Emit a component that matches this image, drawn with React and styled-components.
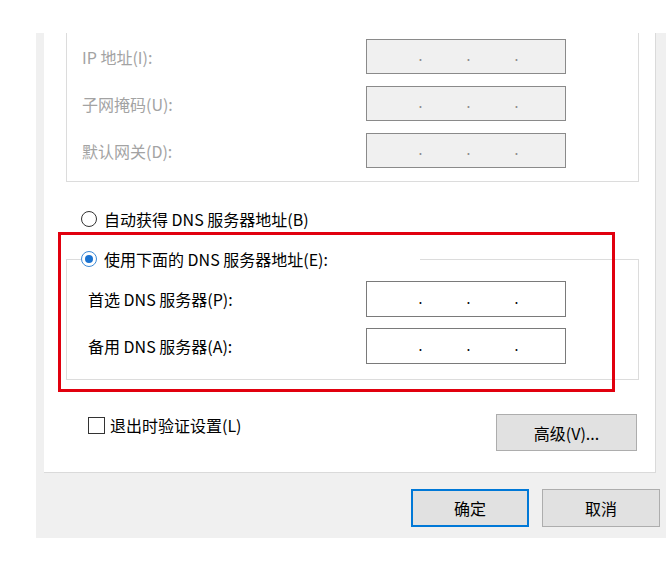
import React from "react";
import styled, { createGlobalStyle } from "styled-components";

const GlobalStyle = createGlobalStyle`
  html, body {
    margin: 0;
    padding: 0;
    background: #fff;
  }
  body {
    font-family: "Noto Sans CJK SC", "Noto Sans", sans-serif;
    font-size: 16px;
    color: #000;
  }
  * {
    box-sizing: border-box;
  }
`;

const Page = styled.div`
  padding: 33px 0 0 36px;
  height: 570px;
`;

const Dialog = styled.div`
  width: 630px;
  height: 505px;
  background: #f0f0f0;
  display: flex;
  flex-direction: column;
`;

const Panel = styled.div`
  position: relative;
  margin-left: 8px;
  width: 612px;
  height: 440px;
  background: #fff;
  border-right: 1px solid #dadada;
  border-bottom: 1px solid #dadada;
  padding-left: 22px;
`;

const GroupTop = styled.div`
  width: 573px;
  height: 149px;
  border: 1px solid #dcdcdc;
  border-top: none;
  padding: 6px 0 0 15px;
  display: flex;
  flex-direction: column;
  gap: 12px;
`;

const Row = styled.div`
  display: flex;
  align-items: center;
  height: ${(p) => p.$h}px;
`;

const Label = styled.span`
  width: ${(p) => p.$w}px;
  line-height: 20px;
  color: ${(p) => (p.$disabled ? "#a3a3a3" : "#000")};
`;

const IpField = styled.div`
  width: 200px;
  height: 100%;
  border: 1px solid ${(p) => (p.$disabled ? "#8a8a8a" : "#7a7a7a")};
  background: ${(p) => (p.$disabled ? "#f0f0f0" : "#fff")};
  display: flex;
  justify-content: center;
  align-items: center;
  gap: 44px;
  padding-left: 5px;
  color: ${(p) => (p.$disabled ? "#8a8a8a" : "#000")};
`;

const Dot = styled.span`
  font-size: 14px;
  line-height: 14px;
  width: 4px;
  text-align: center;
  margin-top: -3px;
`;

const RadioRow = styled.label`
  display: flex;
  align-items: center;
  gap: 7px;
  height: 20px;
  line-height: 20px;
  padding-left: ${(p) => p.$pad}px;
  margin-top: ${(p) => p.$mt || 0}px;
`;

const Radio = styled.span`
  width: 16px;
  height: 16px;
  border-radius: 50%;
  border: 1px solid ${(p) => (p.$checked ? "#3d8ad6" : "#333")};
  background: #fff;
  display: flex;
  align-items: center;
  justify-content: center;

  &::after {
    content: "";
    display: ${(p) => (p.$checked ? "block" : "none")};
    width: 8px;
    height: 8px;
    border-radius: 50%;
    background: #1a73d1;
  }
`;

const Group = styled.fieldset`
  width: 573px;
  margin: 20px 0 0;
  padding: 0 0 15px 14px;
  border: 1px solid #dcdcdc;
  min-inline-size: 0;
`;

const Legend = styled.legend`
  width: 339px;
  padding: 0;
`;

const Rows = styled.div`
  margin-top: 12px;
  padding-left: 7px;
  display: flex;
  flex-direction: column;
  gap: 11px;
`;

const Highlight = styled.div`
  position: absolute;
  left: 14px;
  top: 199px;
  width: 557px;
  height: 160px;
  border: 3px solid #e1000e;
  pointer-events: none;
`;

const Footer = styled.div`
  margin-top: 34px;
  width: 573px;
  display: flex;
  justify-content: space-between;
  align-items: flex-start;
  padding: 0 2px 0 22px;
`;

const CheckRow = styled.label`
  display: flex;
  align-items: center;
  gap: 5px;
  margin-top: 1px;
  line-height: 20px;
`;

const Checkbox = styled.span`
  width: 17px;
  height: 17px;
  border: 1px solid #333;
  background: #fff;
`;

const Button = styled.button`
  width: ${(p) => p.$w}px;
  height: ${(p) => p.$h}px;
  font-family: inherit;
  font-size: 16px;
  color: #000;
  background: #e1e1e1;
  border: ${(p) => (p.$default ? "2px solid #0078d7" : "1px solid #adadad")};
  padding: 0;
`;

const ButtonBar = styled.div`
  margin-top: 16px;
  display: flex;
  justify-content: flex-end;
  gap: 13px;
  padding-right: 6px;
`;

const IpInput = ({ disabled }) => (
  <IpField $disabled={disabled}>
    <Dot>.</Dot>
    <Dot>.</Dot>
    <Dot>.</Dot>
  </IpField>
);

export default function App() {
  return (
    <>
      <GlobalStyle />
      <Page>
        <Dialog>
          <Panel>
            <GroupTop>
              <Row $h={35}>
                <Label $w={284} $disabled>IP 地址(I):</Label>
                <IpInput disabled />
              </Row>
              <Row $h={35}>
                <Label $w={284} $disabled>子网掩码(U):</Label>
                <IpInput disabled />
              </Row>
              <Row $h={35}>
                <Label $w={284} $disabled>默认网关(D):</Label>
                <IpInput disabled />
              </Row>
            </GroupTop>

            <RadioRow $pad={15} $mt={27}>
              <Radio />
              自动获得 DNS 服务器地址(B)
            </RadioRow>

            <Group>
              <Legend>
                <RadioRow $pad={0}>
                  <Radio $checked />
                  使用下面的 DNS 服务器地址(E):
                </RadioRow>
              </Legend>
              <Rows>
                <Row $h={36}>
                  <Label $w={278}>首选 DNS 服务器(P):</Label>
                  <IpInput />
                </Row>
                <Row $h={36}>
                  <Label $w={278}>备用 DNS 服务器(A):</Label>
                  <IpInput />
                </Row>
              </Rows>
            </Group>

            <Footer>
              <CheckRow>
                <Checkbox />
                退出时验证设置(L)
              </CheckRow>
              <Button $w={141} $h={37}>高级(V)...</Button>
            </Footer>

            <Highlight />
          </Panel>
          <ButtonBar>
            <Button $w={118} $h={38} $default>确定</Button>
            <Button $w={118} $h={38}>取消</Button>
          </ButtonBar>
        </Dialog>
      </Page>
    </>
  );
}
